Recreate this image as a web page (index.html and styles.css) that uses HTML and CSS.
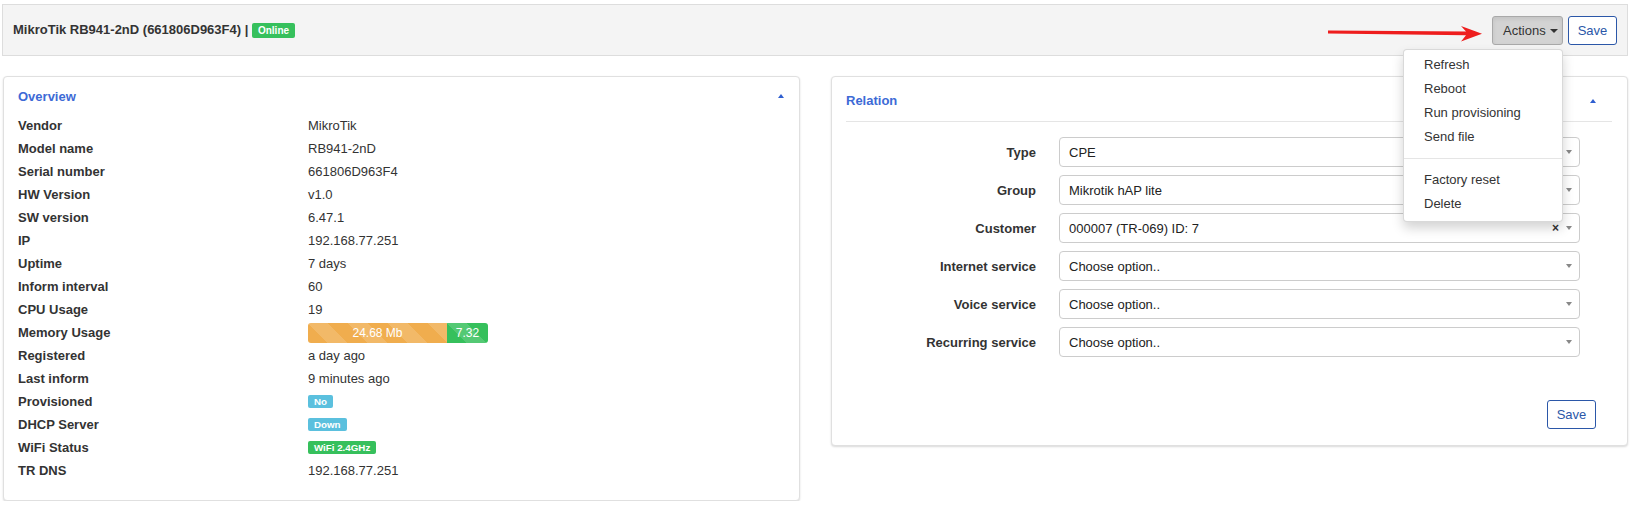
FILE: index.html
```html
<!DOCTYPE html>
<html lang="en">
<head>
<meta charset="utf-8">
<title>MikroTik RB941-2nD</title>
<link rel="stylesheet" href="styles.css">
</head>
<body>
<div class="page">
  <header class="topbar">
    <div class="title">MikroTik RB941-2nD (661806D963F4) | <span class="badge badge-green badge-lg">Online</span></div>
    <div class="actions">
      <div class="dropdown">
        <button class="btn btn-active">Actions <span class="caret"></span></button>
        <ul class="menu">
          <li class="menu-item">Refresh</li>
          <li class="menu-item">Reboot</li>
          <li class="menu-item">Run provisioning</li>
          <li class="menu-item">Send file</li>
          <li class="menu-divider"></li>
          <li class="menu-item">Factory reset</li>
          <li class="menu-item">Delete</li>
        </ul>
      </div>
      <button class="btn btn-outline">Save</button>
    </div>
    <svg class="annot-arrow" width="160" height="24" viewBox="0 0 160 24">
      <polygon points="2,8.4 140,9.6 135,4 156,11.8 135,19.4 140,13.2 2,11.6" fill="#ee1d1d"/>
    </svg>
  </header>

  <main class="content">
    <section class="card card-overview">
      <div class="card-head">
        <span class="card-title">Overview</span>
        <span class="collapse-caret"></span>
      </div>
      <div class="info">
        <div class="info-label">Vendor</div><div class="info-value">MikroTik</div>
        <div class="info-label">Model name</div><div class="info-value">RB941-2nD</div>
        <div class="info-label">Serial number</div><div class="info-value">661806D963F4</div>
        <div class="info-label">HW Version</div><div class="info-value">v1.0</div>
        <div class="info-label">SW version</div><div class="info-value">6.47.1</div>
        <div class="info-label">IP</div><div class="info-value">192.168.77.251</div>
        <div class="info-label">Uptime</div><div class="info-value">7 days</div>
        <div class="info-label">Inform interval</div><div class="info-value">60</div>
        <div class="info-label">CPU Usage</div><div class="info-value">19</div>
        <div class="info-label">Memory Usage</div>
        <div class="info-value">
          <div class="progress">
            <div class="bar bar-orange" style="width: 139px">24.68 Mb</div>
            <div class="bar bar-green">7.32</div>
          </div>
        </div>
        <div class="info-label">Registered</div><div class="info-value">a day ago</div>
        <div class="info-label">Last inform</div><div class="info-value">9 minutes ago</div>
        <div class="info-label">Provisioned</div><div class="info-value"><span class="badge badge-blue">No</span></div>
        <div class="info-label">DHCP Server</div><div class="info-value"><span class="badge badge-blue">Down</span></div>
        <div class="info-label">WiFi Status</div><div class="info-value"><span class="badge badge-green">WiFi 2.4GHz</span></div>
        <div class="info-label">TR DNS</div><div class="info-value">192.168.77.251</div>
      </div>
    </section>

    <section class="card card-relation">
      <div class="relation-head">
        <span class="card-title">Relation</span>
        <span class="collapse-caret caret-relation"></span>
      </div>
      <div class="form">
        <label class="form-label">Type</label>
        <div class="select"><span class="select-text">CPE</span><span class="select-arrow"></span></div>
        <label class="form-label">Group</label>
        <div class="select"><span class="select-text">Mikrotik hAP lite</span><span class="select-arrow"></span></div>
        <label class="form-label">Customer</label>
        <div class="select"><span class="select-text">000007 (TR-069) ID: 7</span><span class="select-clear">×</span><span class="select-arrow"></span></div>
        <label class="form-label">Internet service</label>
        <div class="select"><span class="select-text">Choose option..</span><span class="select-arrow"></span></div>
        <label class="form-label">Voice service</label>
        <div class="select"><span class="select-text">Choose option..</span><span class="select-arrow"></span></div>
        <label class="form-label">Recurring service</label>
        <div class="select"><span class="select-text">Choose option..</span><span class="select-arrow"></span></div>
      </div>
      <div class="form-footer">
        <button class="btn btn-outline">Save</button>
      </div>
    </section>
  </main>
</div>
</body>
</html>
```

FILE: styles.css
```css
* { box-sizing: border-box; }

html, body {
  margin: 0;
  padding: 0;
  background: #ffffff;
}

body {
  font-family: "Liberation Sans", Arial, sans-serif;
  font-size: 13px;
  color: #333333;
}

.page {
  padding: 4px 0 0 2px;
}

/* ---------- top bar ---------- */
.topbar {
  position: relative;
  width: 1626px;
  height: 52px;
  background: #f4f4f4;
  border: 1px solid #dddddd;
  display: flex;
  align-items: center;
  justify-content: space-between;
  padding: 0 10px;
}

.title {
  font-weight: bold;
  font-size: 13px;
  color: #333333;
  white-space: nowrap;
}

.actions {
  display: flex;
  align-items: center;
  gap: 5px;
}

.dropdown {
  position: relative;
}

.btn {
  font-family: "Liberation Sans", Arial, sans-serif;
  font-size: 13px;
  height: 29px;
  border-radius: 3px;
  padding: 0 10px;
  line-height: 27px;
  cursor: pointer;
}

.btn-active {
  width: 71px;
  background: #d3d3d3;
  border: 1px solid #a9a9a9;
  color: #333333;
  box-shadow: inset 0 2px 4px rgba(0, 0, 0, 0.08);
  display: flex;
  align-items: center;
  gap: 4px;
}

.btn-outline {
  width: 49px;
  padding: 0;
  background: #ffffff;
  border: 1px solid #2b57a8;
  color: #2b57a8;
}

.caret {
  display: inline-block;
  width: 0;
  height: 0;
  border-left: 4px solid transparent;
  border-right: 4px solid transparent;
  border-top: 4px solid #333333;
  margin-top: 1px;
}

.menu {
  position: absolute;
  top: 33px;
  right: 0;
  width: 160px;
  margin: 0;
  padding: 3px 0 5px;
  list-style: none;
  background: #ffffff;
  border: 1px solid rgba(0, 0, 0, 0.15);
  border-radius: 4px;
  box-shadow: 0 6px 12px rgba(0, 0, 0, 0.175);
  z-index: 10;
}

.menu-item {
  height: 24px;
  line-height: 24px;
  padding-left: 20px;
  color: #333333;
  font-size: 13px;
  white-space: nowrap;
}

.menu-divider {
  height: 1px;
  margin: 9px 0;
  background: #e5e5e5;
}

.annot-arrow {
  position: absolute;
  left: 1323px;
  top: 17px;
  z-index: 5;
}

/* ---------- badges ---------- */
.badge {
  display: inline-block;
  font-size: 9.75px;
  font-weight: bold;
  color: #ffffff;
  line-height: 11px;
  padding: 1px 6px;
  border-radius: 2px;
  white-space: nowrap;
  vertical-align: middle;
}

.badge-lg {
  font-size: 10px;
  line-height: 13px;
  padding: 1px 6px;
  margin-top: -2px;
}

.badge-green { background: #36c05c; }
.badge-blue  { background: #5bc0de; }

/* ---------- content ---------- */
.content {
  display: grid;
  grid-template-columns: 797px 797px;
  column-gap: 31px;
  align-items: start;
  margin-top: 20px;
  padding-left: 1px;
}

.card {
  background: #ffffff;
  border: 1px solid #e0e0e0;
  border-radius: 4px;
  box-shadow: 0 1px 2px rgba(0, 0, 0, 0.15);
}

.card-overview {
  height: 425px;
  padding: 9px 15px 0 14px;
}

.card-head {
  display: flex;
  align-items: center;
  justify-content: space-between;
  height: 20px;
  margin-bottom: 8px;
}

.card-title {
  color: #3d6ad6;
  font-weight: bold;
  font-size: 13px;
}

.collapse-caret {
  display: inline-block;
  width: 0;
  height: 0;
  border-left: 3.5px solid transparent;
  border-right: 3.5px solid transparent;
  border-bottom: 4px solid #2f5fd0;
}

.info {
  display: grid;
  grid-template-columns: 290px 1fr;
  grid-auto-rows: 23px;
  align-items: center;
}

.info-label {
  font-weight: bold;
  color: #333333;
}

.info-value {
  color: #333333;
  display: flex;
  align-items: center;
}

.progress {
  display: flex;
  width: 180px;
  height: 20px;
  border-radius: 3px;
  overflow: hidden;
}

.bar {
  height: 20px;
  line-height: 20px;
  font-size: 12px;
  color: #ffffff;
  text-align: center;
  background-image: linear-gradient(45deg,
    rgba(255, 255, 255, 0.15) 25%, transparent 25%,
    transparent 50%, rgba(255, 255, 255, 0.15) 50%,
    rgba(255, 255, 255, 0.15) 75%, transparent 75%, transparent);
  background-size: 40px 40px;
}

.bar-orange { background-color: #f0ad4e; }
.bar-green  { background-color: #36c05c; flex: 1; }

/* ---------- relation ---------- */
.card-relation {
  height: 370px;
  padding: 0 15px 0 14px;
  display: flex;
  flex-direction: column;
}

.relation-head {
  display: flex;
  align-items: center;
  justify-content: space-between;
  padding: 13px 16px 11px 0;
  border-bottom: 1px solid #e5e5e5;
  box-sizing: content-box;
  height: 20px;
}

.caret-relation {
  margin-top: 1px;
}

.form {
  display: grid;
  grid-template-columns: 190px 521px;
  column-gap: 23px;
  grid-auto-rows: 30px;
  row-gap: 8px;
  align-items: center;
  margin-top: 15px;
}

.form-label {
  font-weight: bold;
  text-align: right;
  color: #333333;
}

.select {
  height: 30px;
  border: 1px solid #cccccc;
  border-radius: 4px;
  display: flex;
  align-items: center;
  padding: 0 7px 0 9px;
  background: #ffffff;
}

.select-text {
  flex: 1;
  color: #222222;
}

.select-clear {
  font-weight: bold;
  font-size: 12px;
  color: #333333;
  margin-right: 7px;
}

.select-arrow {
  width: 0;
  height: 0;
  border-left: 3.5px solid transparent;
  border-right: 3.5px solid transparent;
  border-top: 4px solid #888888;
}

.form-footer {
  display: flex;
  justify-content: flex-end;
  margin-top: 43px;
  padding-right: 16px;
}
```
